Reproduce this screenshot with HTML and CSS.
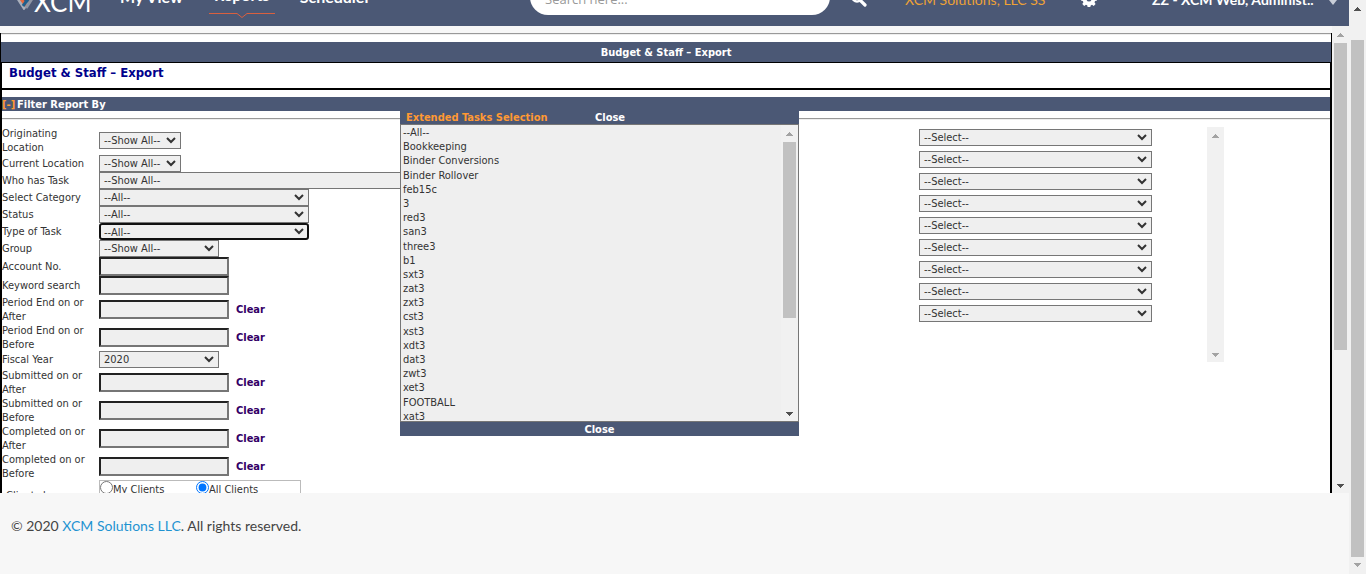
FILE: index.html
```html
<!DOCTYPE html>
<html lang="en">
<head>
<meta charset="utf-8">
<title>Budget &amp; Staff – Export</title>
<link rel="stylesheet" href="styles.css">
</head>
<body>
<svg class="symbols" aria-hidden="true">
  <symbol id="up" viewBox="0 0 7 4"><path d="M3 0h1v1h1v1h1v1h1v1H0V3h1V2h1V1h1z"/></symbol>
  <symbol id="down" viewBox="0 0 7 4"><path d="M0 0h7v1H6v1H5v1H4v1H3V3H2V2H1V1H0z"/></symbol>
</svg>
<div class="page">
  <header class="topbar">
    <a class="logo" href="#" aria-label="XCM home">
      <svg class="logo-mark" width="24" height="30" viewBox="0 0 24 30" aria-hidden="true">
        <path d="M2 14l9 14 4-5" fill="none" stroke="#a9afbb" stroke-width="3"/>
        <path d="M6 16l7 10" fill="none" stroke="#e8693f" stroke-width="3"/>
        <path d="M18 15l-8 11" fill="none" stroke="#1f5f8c" stroke-width="3"/>
        <path d="M22 14l-9 14" fill="none" stroke="#8f96a5" stroke-width="3"/>
      </svg>
      <span>XCM</span>
    </a>
    <nav class="nav">
      <a href="#">My View</a>
      <a class="current" href="#">Reports<svg width="66" height="6" viewBox="0 0 66 6" aria-hidden="true"><path d="M0 1.500h28l5 4 5-4h28" fill="none" stroke="#d9603f"/></svg></a>
      <a href="#">Scheduler</a>
    </nav>
    <input class="search" type="text" placeholder="Search here..." aria-label="Search">
    <button class="icon-btn find" aria-label="Find"><svg width="16" height="16" viewBox="0 0 16 16"><circle cx="6" cy="6" r="4.500" fill="none" stroke="#fff" stroke-width="2.600"/><path d="M9.500 9.500l4.500 4.500" stroke="#fff" stroke-width="3.200" stroke-linecap="round"/></svg></button>
    <a class="firm" href="#">XCM Solutions, LLC SS</a>
    <button class="icon-btn gear" aria-label="Settings"><svg width="16" height="16" viewBox="0 0 16 16"><path fill="#fff" fill-rule="evenodd" d="M6.600 0h2.800l.4 2 1.400.6L12.900 1.400l1.900 1.900-1.200 1.700.6 1.400 1.800.4v2.700l-1.900.4-.6 1.400 1.100 1.700-1.900 1.900-1.700-1.100-1.300.6-.4 1.600H6.600l-.4-1.700-1.300-.6-1.700 1.200-1.900-1.900 1.100-1.700-.6-1.400L0 9.500V6.800l1.900-.4.6-1.400-1.200-1.700 1.900-1.900 1.700 1.200 1.300-.6zM8 5.500a2.500 2.500 0 1 0 0 5 2.500 2.500 0 0 0 0-5z"/></svg></button>
    <button class="user">ZZ - XCM Web, Administ.. <svg width="8" height="6" viewBox="0 0 8 6" aria-hidden="true"><path d="M0 1h8L4 6z" fill="#c9ced8"/></svg></button>
  </header>

  <main class="frame">
    <div class="report">
      <hr>
      <h1 class="bar title">Budget &amp; Staff – Export</h1>
      <div class="inner">
        <h2 class="heading">Budget &amp; Staff – Export</h2>
        <h3 class="bar filter"><button class="toggle">[-]</button>Filter Report By</h3>
        <div class="body">
          <hr>
          <div class="columns">
            <form class="filters">
              <label for="f1">Originating Location</label><select id="f1" class="w-s"><option>--Show All--</option></select><span></span>
              <label for="f2">Current Location</label><select id="f2" class="w-s"><option>--Show All--</option></select><span></span>
              <label for="f3">Who has Task</label><select id="f3" class="w-xl"><option>--Show All--</option></select><span></span>
              <label for="f4">Select Category</label><select id="f4" class="w-l"><option>--All--</option></select><span></span>
              <label for="f5">Status</label><select id="f5" class="w-l"><option>--All--</option></select><span></span>
              <label for="f6">Type of Task</label><select id="f6" class="w-l active"><option>--All--</option></select><span></span>
              <label for="f7">Group</label><select id="f7" class="w-m"><option>--Show All--</option></select><span></span>
              <label for="f8">Account No.</label><input id="f8" type="text"><span></span>
              <label for="f9">Keyword search</label><input id="f9" type="text"><span></span>
              <label for="f10">Period End on or After</label><input id="f10" type="text"><a href="#">Clear</a>
              <label for="f11">Period End on or Before</label><input id="f11" type="text"><a href="#">Clear</a>
              <label for="f12">Fiscal Year</label><select id="f12" class="w-m"><option>2020</option></select><span></span>
              <label for="f13">Submitted on or After</label><input id="f13" type="text"><a href="#">Clear</a>
              <label for="f14">Submitted on or Before</label><input id="f14" type="text"><a href="#">Clear</a>
              <label for="f15">Completed on or After</label><input id="f15" type="text"><a href="#">Clear</a>
              <label for="f16">Completed on or Before</label><input id="f16" type="text"><a href="#">Clear</a>
              <span class="clients-label">Clients by</span>
              <div class="clients">
                <label><input type="radio" name="c"><span>My Clients</span></label>
                <label><input type="radio" name="c" checked><span>All Clients</span></label>
              </div>
            </form>
            <div class="picks">
              <select aria-label="Field 1"><option>--Select--</option></select>
              <select aria-label="Field 2"><option>--Select--</option></select>
              <select aria-label="Field 3"><option>--Select--</option></select>
              <select aria-label="Field 4"><option>--Select--</option></select>
              <select aria-label="Field 5"><option>--Select--</option></select>
              <select aria-label="Field 6"><option>--Select--</option></select>
              <select aria-label="Field 7"><option>--Select--</option></select>
              <select aria-label="Field 8"><option>--Select--</option></select>
              <select aria-label="Field 9"><option>--Select--</option></select>
            </div>
            <div class="scroll idle"><svg class="dim"><use href="#up"/></svg><svg class="dim end"><use href="#down"/></svg></div>
          </div>
        </div>
      </div>
      <section class="dialog">
        <div class="dialog-head"><strong>Extended Tasks Selection</strong><button>Close</button></div>
        <div class="dialog-body">
          <ul>
            <li>--All--</li><li>Bookkeeping</li><li>Binder Conversions</li><li>Binder Rollover</li><li>feb15c</li><li>3</li><li>red3</li><li>san3</li><li>three3</li><li>b1</li><li>sxt3</li><li>zat3</li><li>zxt3</li><li>cst3</li><li>xst3</li><li>xdt3</li><li>dat3</li><li>zwt3</li><li>xet3</li><li>FOOTBALL</li><li>xat3</li>
          </ul>
          <div class="scroll list"><svg class="dim"><use href="#up"/></svg><i></i><svg class="end"><use href="#down"/></svg></div>
        </div>
        <div class="dialog-foot"><button>Close</button></div>
      </section>
    </div>
    <div class="scroll middle"><svg class="dim"><use href="#up"/></svg><i></i><svg class="end"><use href="#down"/></svg></div>
  </main>
  <footer>© 2020 <a href="#">XCM Solutions LLC</a>. All rights reserved.</footer>
</div>
<div class="scroll outer"><svg><use href="#up"/></svg><i></i><svg class="dim end"><use href="#down"/></svg></div>
</body>
</html>
```
FILE: styles.css
```css
* { box-sizing: border-box; }
body { margin: 0; height: 100vh; display: flex; overflow: hidden; background: #f7f7f7; color: #333; font: 11px/14px "DejaVu Sans Condensed", "Noto Sans", sans-serif; }
button { font: inherit; border: 0; padding: 0; background: none; color: inherit; cursor: pointer; }
a { text-decoration: none; }
.symbols { position: absolute; width: 0; height: 0; }
.page { flex: 1; min-width: 0; display: flex; flex-direction: column; }

.topbar { height: 26px; flex: none; overflow: hidden; background: #4b5875; color: #fff; display: flex; align-items: flex-end; font: 700 14px/20px Lato, sans-serif; white-space: nowrap; }
.logo { display: flex; align-items: flex-end; flex: none; width: 106px; padding: 0 0 12px 13px; color: #fff; font: 400 26px/24px Lato, sans-serif; }
.logo span { margin-left: -3px; }
.logo-mark { flex: none; margin-bottom: 4px; }
.nav { display: flex; align-items: flex-end; flex: none; width: 424px; }
.nav a { color: #fff; font-size: 16px; padding: 0 0 19px 14px; }
.nav .current { width: 66px; padding: 0; margin: 0 11px 0 26px; text-align: center; }
.nav .current svg { display: block; margin: 7px 0 8px; }
.search { flex: none; width: 300px; height: 36px; margin-bottom: 11px; border: 0; border-radius: 18px; background: #fff; padding: 4px 15px 0; font: 13px "Open Sans", sans-serif; }
.search::placeholder { color: #999; }
.icon-btn { height: 16px; flex: none; }
.icon-btn svg { display: block; }
.find { margin: 0 38px 19px 21px; }
.firm { width: 176px; color: #eea236; font-weight: 400; padding-bottom: 16px; }
.gear { margin-bottom: 19px; }
.user { flex: 1; text-align: right; padding: 0 12px 16px 0; font-weight: 700; }
.user svg { margin-left: 12px; }

.frame { flex: none; height: 467px; display: flex; overflow: hidden; }
.report { flex: 1; min-width: 0; position: relative; margin-top: 7px; border: solid #000; border-width: 0 1px; background: #fff; }
hr { margin: 0; height: 2px; border: 0; border-top: 1px solid #999; background: #eee; }
.bar { margin: 0; background: #4b5875; color: #fff; font-size: 11px; font-weight: 700; }
.title { height: 20px; margin-top: 7px; line-height: 22px; text-align: center; }
.inner { border: solid #000; border-width: 1px 1px 0; }
.heading { margin: 0; height: 27px; padding: 2px 7px; border-bottom: 2px solid #000; color: #00008b; font: 700 13px/16px "DejaVu Sans Condensed", sans-serif; }
.filter { height: 14px; margin-top: 7px; line-height: 16px; }
.toggle { width: 15px; text-align: left; color: #ff9933; }
.body { padding-top: 7px; }
.columns { display: flex; padding-top: 7px; }
.filters { flex: 1; display: grid; grid-template-columns: 97px 130px 1fr; grid-template-rows: 27px 18px 17px 17px 17px 17px 17px 19px 19px 28px 28px 17px 28px 28px 28px 28px 18px; align-items: center; }
.filters > label { padding: 1px 12px 0 0; }
select, .filters > input { display: block; margin: 0; color: #333; background: #efefef; border: 1px solid #767676; border-radius: 0; font: inherit; }
select { height: 17px; appearance: none; padding: 1px 4px 0; background: #efefef url("data:image/svg+xml,%3Csvg xmlns='http://www.w3.org/2000/svg' width='10' height='8'%3E%3Cpath d='M1 2l4 4 4-4' fill='none' stroke='%23333' stroke-width='2'/%3E%3C/svg%3E") no-repeat right 4px top 3px; }
.w-s { width: 82px; }
.w-m { width: 120px; }
.w-l { width: 210px; }
.w-xl { width: 420px; }
.active { border: 2px solid #101010; border-radius: 3px; padding: 1px 3px 0; background-position: right 3px top 2px; }
.filters > input { width: 130px; height: 19px; border: 2px solid #767676; border-color: #222 #767676 #767676 #222; }
.filters > a { padding: 1px 0 0 7px; color: #330066; font-weight: 700; }
.clients { grid-column: 2 / 4; width: 202px; height: 24px; align-self: start; display: flex; border: 1px solid #bbb; }
.clients label { width: 96px; display: flex; align-items: flex-start; line-height: 18px; }
.clients input { width: 13px; height: 13px; margin: 0; }
.clients-label { align-self: start; padding: 9px 0 0 4px; }
.picks { width: 288px; display: flex; flex-direction: column; gap: 5px; padding-top: 2px; }
.picks select { width: 233px; }

.scroll { flex: none; width: 17px; display: flex; flex-direction: column; align-items: center; padding: 7px 0 5px; background: #f1f1f1; }
.scroll svg { width: 7px; height: 4px; flex: none; fill: #505050; }
.scroll .dim { fill: #a3a3a3; }
.scroll i { width: 13px; margin-top: 6px; background: #c1c1c1; }
.scroll .end { margin-top: auto; }
.idle { height: 235px; margin-right: 106px; }
.middle i { height: 307px; }
.outer i { height: 517px; margin-top: 29px; }
.outer { padding-bottom: 7px; }
.list i { height: 176px; }

.dialog { position: absolute; left: 30%; top: 77px; width: 399px; background: #4b5875; color: #fff; font-weight: 700; }
.dialog-head { display: flex; height: 14px; line-height: 16px; padding-left: 6px; }
.dialog-head strong { width: 189px; color: #ff9933; }
.dialog-body { display: flex; height: 298px; overflow: hidden; border: 1px solid #767676; background: #efefef; }
.dialog-body ul { flex: 1; height: 299px; margin: 0; padding: 1px 2px 0; display: flex; flex-direction: column; justify-content: space-between; list-style: none; color: #333; font-weight: 400; }
.dialog-body li { line-height: 14px; }
.dialog-foot { height: 14px; line-height: 16px; text-align: center; }

footer { padding: 22px 11px; color: #444; font: 14px/22px Lato, sans-serif; }
footer a { color: #1f93d1; }
```
